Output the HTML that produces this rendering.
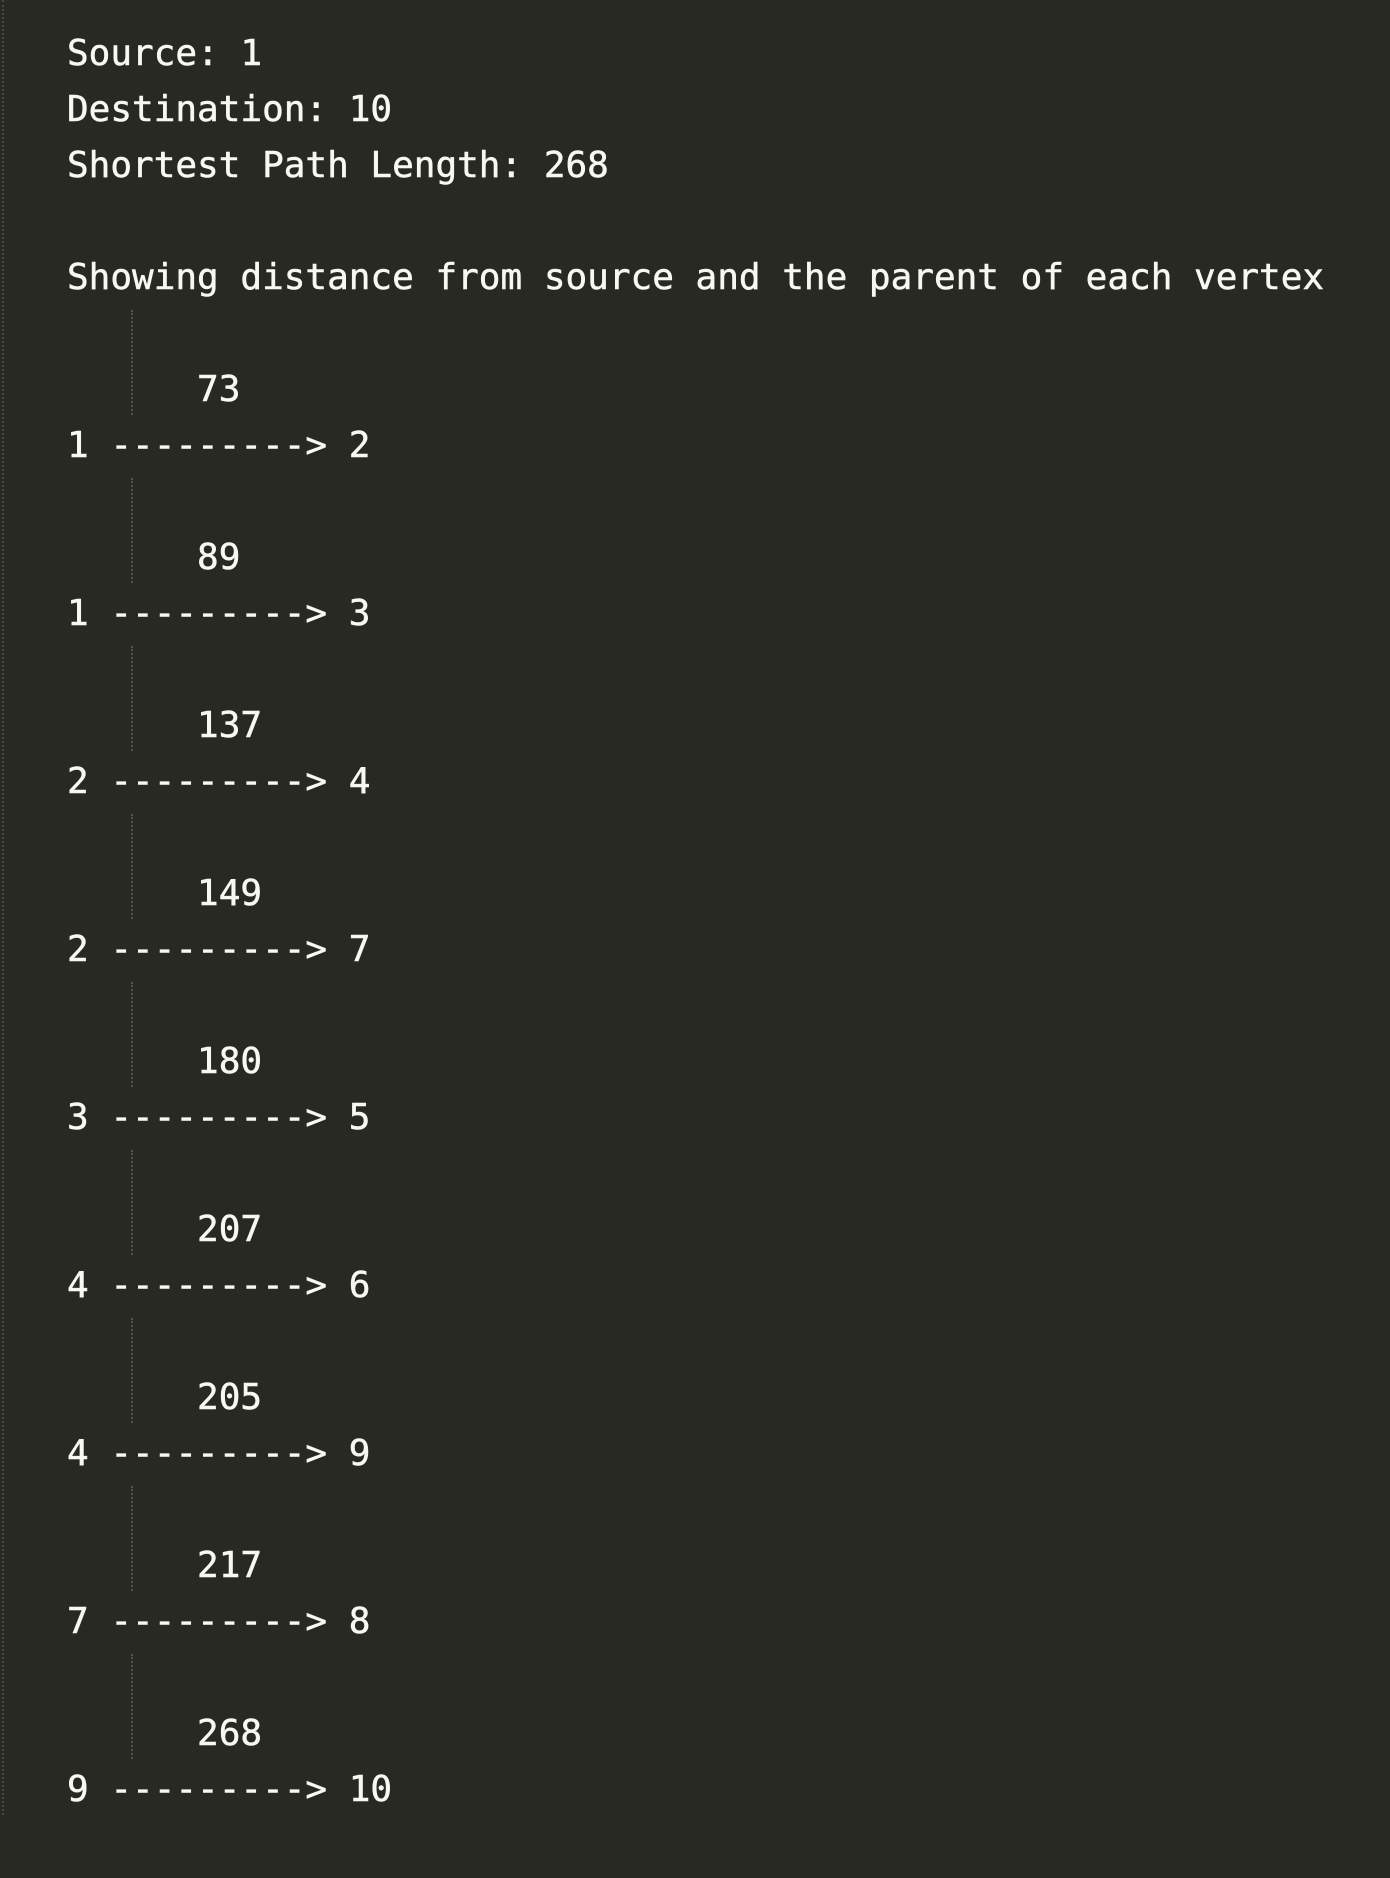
<!DOCTYPE html>
<html><head><meta charset="utf-8"><style>
html,body{margin:0;padding:0;background:#282923;width:1390px;height:1878px;overflow:hidden;position:relative}
pre{position:absolute;left:67px;top:26px;margin:0;font-family:"DejaVu Sans Mono","Liberation Mono",monospace;font-size:36px;line-height:56px;color:#f8f8f2;-webkit-text-stroke:0.5px #f8f8f2}
.lb{position:absolute;left:2px;top:0;height:1815px;border-left:2px dotted #4a4a44}
.g{position:absolute;left:131px;width:0;height:105px;border-left:2px dotted #55554f}
</style></head><body>
<div class="lb"></div>
<div class="g" style="top:310px"></div>
<div class="g" style="top:478px"></div>
<div class="g" style="top:646px"></div>
<div class="g" style="top:814px"></div>
<div class="g" style="top:982px"></div>
<div class="g" style="top:1150px"></div>
<div class="g" style="top:1318px"></div>
<div class="g" style="top:1486px"></div>
<div class="g" style="top:1654px"></div>
<pre>Source: 1
Destination: 10
Shortest Path Length: 268

Showing distance from source and the parent of each vertex

      73
1 ---------&gt; 2

      89
1 ---------&gt; 3

      137
2 ---------&gt; 4

      149
2 ---------&gt; 7

      180
3 ---------&gt; 5

      207
4 ---------&gt; 6

      205
4 ---------&gt; 9

      217
7 ---------&gt; 8

      268
9 ---------&gt; 10</pre>
</body></html>
